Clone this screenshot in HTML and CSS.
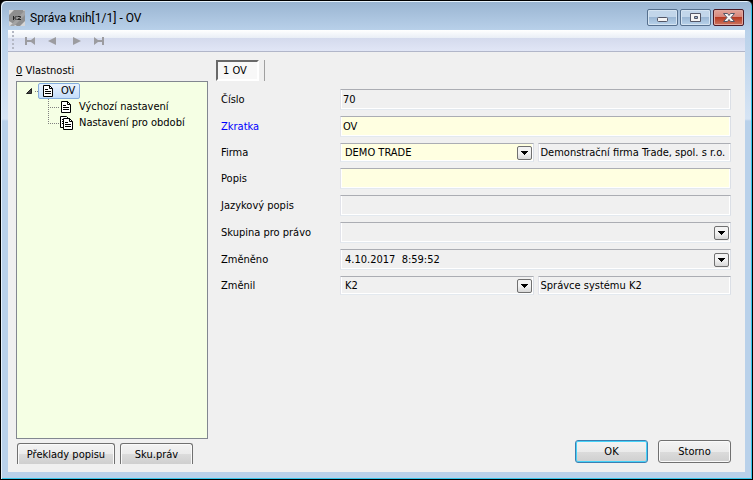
FILE: index.html
```html
<!DOCTYPE html>
<html lang="cs">
<head>
<meta charset="UTF-8">
<title>Správa knih[1/1] - OV</title>
<link rel="stylesheet" href="styles.css">
</head>
<body>
<svg class="defs" width="0" height="0">
  <symbol id="doc" viewBox="0 0 10 12">
    <path d="M.5.5h6l3 3v8h-9z" fill="#fff" stroke="#000"/>
    <path d="M6.500 0v3.500h3M2 4.500h3M2 6.500h6M2 8.500h6" fill="none" stroke="#000"/>
  </symbol>
  <symbol id="arrow" viewBox="0 0 13 12">
    <path d="M3 4h7v1h-1v1h-1v1h-1v1h-1v-1h-1v-1h-1v-1h-1z" fill="#000"/>
  </symbol>
</svg>
<div class="window">
  <header class="titlebar">
    <svg class="logo" width="16" height="16" viewBox="0 0 16 16">
      <path d="M0 0h16v16H0z" fill="#d6d6d6"/>
      <path d="M5 0h9l2 3v8l-5 5H8L0 11V5z" fill="#8e8e8e"/>
      <path d="M16 0v5L5 16H1z" fill="#a4a4a4"/>
      <path d="M4.500 6v4M7.500 6l-2 2 2 2M8.500 6.500h3v1l-3 2H12" fill="none" stroke="#222"/>
    </svg>
    <h1>Správa knih[1/1] - OV</h1>
    <div class="window-buttons">
      <button type="button" aria-label="Minimalizovat">
        <svg width="29" height="15" viewBox="0 0 29 15"><rect x="9.500" y="7.500" width="10" height="4" rx="1" fill="#f4f4f4" stroke="#535666"/></svg>
      </button>
      <button type="button" aria-label="Maximalizovat">
        <svg width="29" height="15" viewBox="0 0 29 15"><path d="M9.500 3.500h10v8h-10zM13.500 6.500v2h3v-2z" fill="#f4f4f4" fill-rule="evenodd" stroke="#535666"/></svg>
      </button>
      <button type="button" class="close" aria-label="Zavřít">
        <svg width="29" height="15" viewBox="0 0 29 15"><path d="M9.500 3.500h4l1.500 2 1.500-2h4l-3.500 4 3.500 4h-4l-1.500-2-1.500 2h-4l3.500-4z" fill="#f6f6f6" stroke="#535666"/></svg>
      </button>
    </div>
  </header>

  <div class="client">
    <div class="toolbar">
      <span class="grip"></span>
      <button type="button" aria-label="První"><svg width="10" height="8" viewBox="0 0 10 8"><path d="M0 0h2v8H0zM10 0v8L6 5H2V3h4z"/></svg></button>
      <button type="button" aria-label="Předchozí"><svg width="10" height="8" viewBox="0 0 10 8"><path d="M9 0v8L1 4z"/></svg></button>
      <button type="button" class="next" aria-label="Další"><svg width="10" height="8" viewBox="0 0 10 8"><path d="M1 0v8l8-4z"/></svg></button>
      <button type="button" aria-label="Poslední"><svg width="10" height="8" viewBox="0 0 10 8"><path d="M8 0h2v8H8zM0 0v8l4-3h4V3H4z"/></svg></button>
    </div>

    <main class="content">
      <section class="side">
        <div class="side-label"><u>0</u> Vlastnosti</div>
        <div class="tree">
          <div class="root">
            <svg class="expander" width="6" height="6" viewBox="0 0 6 6"><path d="M5.500.5v5h-5z" fill="#444" stroke="#222"/></svg>
            <span class="stub"></span>
            <span class="selected"><svg width="10" height="12"><use href="#doc"/></svg>OV</span>
          </div>
          <ul>
            <li><svg width="13" height="12" viewBox="0 0 13 12"><use href="#doc" x="1" width="10" height="12"/></svg>Výchozí nastavení</li>
            <li><svg width="13" height="14" viewBox="0 0 13 14"><path d="M.5.5h6l2 2v9h-8z" fill="#fff" stroke="#000"/><path d="M2 3.500h2M2 5.500h2M2 7.500h2" stroke="#000"/><use href="#doc" x="3" y="2" width="10" height="12"/></svg>Nastavení pro období</li>
          </ul>
        </div>
        <div class="side-buttons">
          <button type="button" class="btn translate">Překlady popisu</button>
          <button type="button" class="btn">Sku.práv</button>
        </div>
      </section>

      <form class="detail">
        <div class="tabs">
          <button type="button" class="tab">1 OV</button>
        </div>
        <div class="fields">
          <label for="cislo">Číslo</label>
          <input id="cislo" class="field" value="70" readonly>

          <label for="zkratka" class="required">Zkratka</label>
          <input id="zkratka" class="field editable" value="OV">

          <label for="firma">Firma</label>
          <div class="pair">
            <div class="combo">
              <select id="firma" class="field editable"><option>DEMO TRADE</option></select>
              <svg class="drop" width="15" height="14"><use href="#arrow"/></svg>
            </div>
            <input class="field" value="Demonstrační firma Trade, spol. s r.o." aria-label="Název firmy" readonly>
          </div>

          <label for="popis">Popis</label>
          <input id="popis" class="field editable">

          <label for="jazyk">Jazykový popis</label>
          <input id="jazyk" class="field" readonly>

          <label for="skupina">Skupina pro právo</label>
          <div class="combo">
            <select id="skupina" class="field"><option></option></select>
            <svg class="drop" width="15" height="14"><use href="#arrow"/></svg>
          </div>

          <label for="zmeneno">Změněno</label>
          <div class="combo">
            <select id="zmeneno" class="field"><option>4.10.2017&nbsp; 8:59:52</option></select>
            <svg class="drop" width="15" height="14"><use href="#arrow"/></svg>
          </div>

          <label for="zmenil">Změnil</label>
          <div class="pair">
            <div class="combo">
              <select id="zmenil" class="field"><option>K2</option></select>
              <svg class="drop" width="15" height="14"><use href="#arrow"/></svg>
            </div>
            <input class="field" value="Správce systému K2" aria-label="Jméno uživatele" readonly>
          </div>
        </div>
        <div class="actions">
          <button type="submit" class="btn default">OK</button>
          <button type="button" class="btn">Storno</button>
        </div>
      </form>
    </main>
  </div>
</div>
</body>
</html>
```

FILE: styles.css
```css
* {
  box-sizing: border-box;
}
body {
  margin: 0;
  background: #000;
  color: #000;
  font: 11px/16px Tahoma, "DejaVu Sans Condensed", "Noto Sans", sans-serif;
}
button, input, select {
  margin: 0;
  color: inherit;
  font: inherit;
}
svg {
  display: block;
  flex: none;
}
.defs {
  position: absolute;
}

/* window frame */
.window {
  display: flex;
  flex-direction: column;
  min-height: 100vh;
  padding: 0 6px 7px;
  border: 1px solid #000;
  border-radius: 6px 6px 0 0;
  background: linear-gradient(#99b4d1, #b9d1ea 30px, #d6e4f4 118px, #b9d1ea 120px);
  box-shadow: inset 1px 1px #e6f2fc, inset -1px -1px #35c5ea;
}
.titlebar {
  display: flex;
  align-items: center;
  height: 29px;
  padding: 4px 2px 0;
}
.titlebar h1 {
  flex: 1;
  margin: 0 0 0 5px;
  font: 12px/16px "Segoe UI", Roboto, sans-serif;
}
.window-buttons {
  display: flex;
  gap: 2px;
}
.window-buttons button {
  width: 31px;
  height: 17px;
  padding: 0;
  border: 1px solid #56708e;
  border-radius: 2px;
  background: linear-gradient(#c2d6ea 50%, #9bb7d4 50%, #b9d3eb);
  box-shadow: inset 0 0 0 1px #d5e4f2;
}
.window-buttons .close {
  border-color: #4c1a26;
  background: linear-gradient(#e3a499, #d5857a 50%, #b83a22 50%, #cc7560);
  box-shadow: inset 0 0 0 1px #e0a79e;
}
.client {
  display: flex;
  flex: 1;
  flex-direction: column;
  margin: 0 1px;
  background: #f0f0f0;
}

/* toolbar */
.toolbar {
  display: flex;
  align-items: center;
  height: 22px;
  padding-left: 4px;
  border-bottom: 1px solid #b1b6c9;
  background: linear-gradient(#fff, #e9eef6 8px, #d4daed 8px, #e1e6f6);
}
.toolbar button {
  width: 22px;
  padding: 0 6px;
  border: 0;
  background: none;
}
.toolbar .next {
  margin-left: 3px;
}
.toolbar path {
  fill: #9c9ca0;
}
.grip {
  width: 2px;
  height: 19px;
  margin-right: 5px;
  background: repeating-linear-gradient(#b4b8c4 0 2px, transparent 2px 4px);
}

/* main area */
.content {
  display: grid;
  flex: 1;
  grid-template-columns: 192px 1fr;
  gap: 8px;
  padding: 8px 14px 8px 8px;
}
.side {
  display: flex;
  flex-direction: column;
}
.side-label {
  margin: 3px 0 2px;
}
.tree {
  flex: 1;
  padding: 1px 9px;
  border: 1px solid #828790;
  background: #f5ffe4;
}
.root {
  display: flex;
  align-items: center;
}
.stub {
  width: 3px;
  margin-left: 3px;
  border-top: 1px dotted #808080;
}
.selected {
  display: flex;
  gap: 8px;
  align-items: center;
  height: 16px;
  padding: 0 4px;
  border: 1px solid #84acdd;
  border-radius: 2px;
  background: linear-gradient(#eaf3fd, #c4ddfa);
}
.tree ul {
  margin: 0 0 0 22px;
  padding: 0;
  list-style: none;
}
.tree li {
  display: flex;
  gap: 6px;
  align-items: center;
  height: 16px;
  white-space: nowrap;
}
/* dotted branch lines */
.tree li::before {
  width: 12px;
  height: 16px;
  margin-right: -6px;
  background: linear-gradient(#808080 50%, transparent 50%) 0 0 / 1px 2px repeat-y,
    linear-gradient(90deg, #808080 50%, transparent 50%) 0 8px / 2px 1px repeat-x;
  content: "";
}
.tree li:last-child::before {
  height: 9px;
  align-self: flex-start;
}
.side-buttons {
  display: flex;
  gap: 5px;
  margin: 4px 1px 0;
}

.btn {
  width: 73px;
  height: 23px;
  padding: 0;
  border: 1px solid #707070;
  border-radius: 3px;
  background: linear-gradient(#f3f3f3, #ebebeb 50%, #dcdcdc 50%, #cfcfcf);
  box-shadow: inset 0 0 0 1px #fafafa;
}
.side-buttons .btn {
  height: 21px;
  padding-top: 2px;
  border-bottom: 0;
  border-radius: 3px 3px 0 0;
  box-shadow: inset 1px 1px #fafafa, inset -1px 0 #fafafa;
}
.side-buttons .translate {
  width: 98px;
}
.default {
  border-color: #3c7fb1;
  box-shadow: inset 0 0 0 1px #46d2f8;
}

/* form */
.detail {
  display: flex;
  flex-direction: column;
}
.tabs {
  display: flex;
  align-self: flex-start;
  padding-right: 5px;
  border-right: 1px solid #a0a0a0;
}
.tab {
  width: 43px;
  height: 21px;
  padding: 0 0 0 5px;
  border: 2px solid;
  border-color: #696969 #fff #fff #696969;
  background: #f8f8f8;
  text-align: left;
}
.fields {
  display: grid;
  grid-template-columns: 113px 1fr;
  grid-template-rows: 21px 21px 19px 21px 21px 21px 21px 19px;
  gap: 6px;
  margin: 8px 0 0 5px;
}
.fields label {
  align-self: center;
}
.required {
  color: #00f;
}
.field {
  display: block;
  width: 100%;
  height: 100%;
  min-width: 0;
  padding: 0 2px;
  border: 1px solid;
  border-color: #abadb3 #dbdfe6 #e3e9ef #e2e3ea;
  border-radius: 0;
  outline: 0;
  background: #f0f0f0;
  box-shadow: inset 1px 0 #fff, inset -1px -1px #fff;
  appearance: none;
}
.editable {
  background: #ffffe1;
}
.combo {
  position: relative;
  min-width: 0;
}
.combo .field {
  padding: 0 20px 0 4px;
}
.drop {
  position: absolute;
  top: 0;
  right: 2px;
  bottom: 0;
  margin: auto;
  border: 1px solid #707070;
  border-radius: 2px;
  background: linear-gradient(#f3f3f3 50%, #d8d8d8);
  pointer-events: none;
}
.pair {
  display: grid;
  grid-template-columns: 1fr 1fr;
  gap: 4px;
}
.actions {
  display: flex;
  gap: 10px;
  justify-content: flex-end;
  margin: auto 0 1px;
}
```
